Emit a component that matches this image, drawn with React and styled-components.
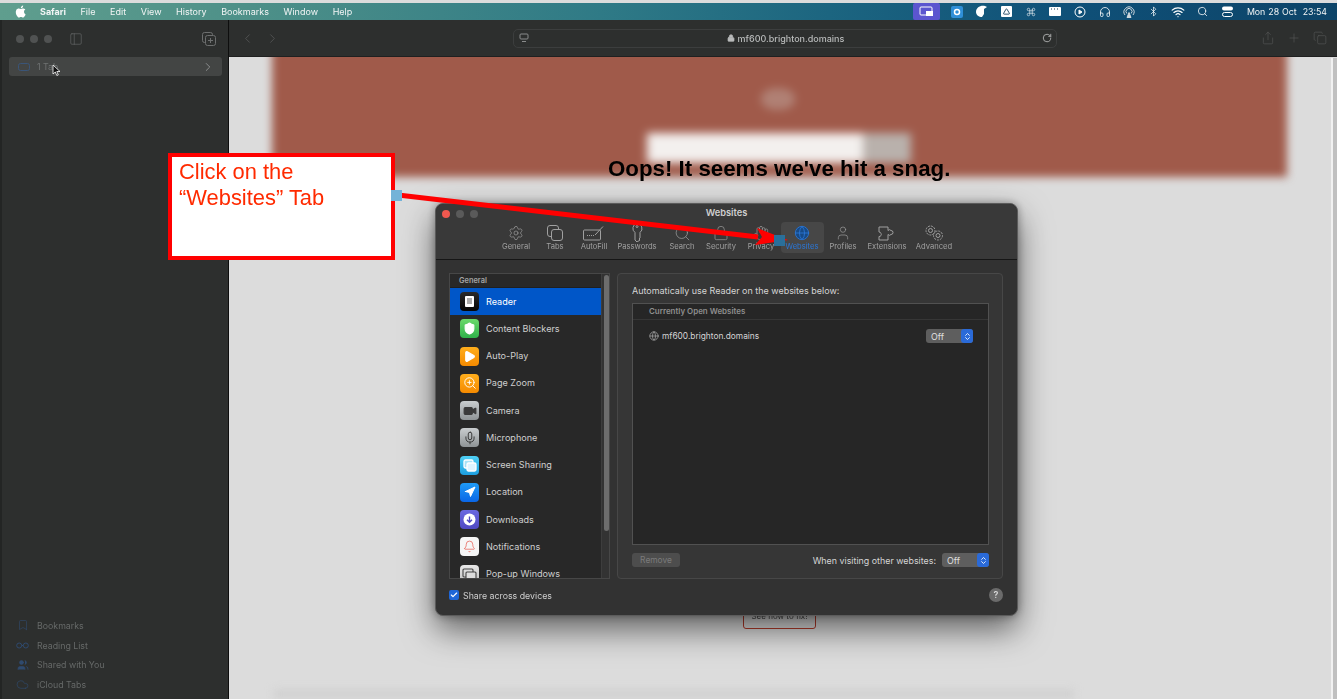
import React from "react";
import styled, { createGlobalStyle } from "styled-components";
import {
  Settings, Search, Lock, Hand, Globe, User, Shield, Play, Video, Mic, Navigation,
  Bell, ChevronLeft, ChevronRight, ChevronsUpDown, Check, RotateCw, Share, Plus, Copy, Bookmark,
  Users, Cloud, Headphones, Bluetooth, Wifi, Command, Triangle, ZoomIn, PanelLeft,
} from "lucide-react";

const Global = createGlobalStyle`
  html, body { margin: 0; padding: 0; background: #dcdcdc; overflow: hidden; }
  #root { width: 1337px; height: 699px; overflow: hidden; }
  * { box-sizing: border-box; }
`;

const Screen = styled.div`
  width: 1337px; height: 699px; display: flex; flex-direction: column;
  font-family: "Inter", "Liberation Sans", sans-serif; position: relative; overflow: hidden;
`;
const TopStrip = styled.div`height: 3px; background: #dcdcdc; flex: none;`;
const MenuBar = styled.div`
  height: 17px; flex: none; display: flex; align-items: center; padding: 0 10px 0 15px;
  background: linear-gradient(90deg, #5f9e8e 0%, #4c8f88 20%, #2f7a86 45%, #1c6580 62%, #0f5078 80%, #0d4468 100%);
  color: #f2f5f5; font-size: 9px; filter: blur(.25px);
`;
const Apple = styled.svg`width: 11px; height: 13px; margin-right: 14px; fill: #fff;`;
const MenuItem = styled.span`margin-right: 14.6px; font-weight: ${p => (p.$b ? 700 : 400)}; white-space: nowrap;`;
const StatusArea = styled.div`margin-left: auto; display: flex; align-items: center; height: 100%;`;
const Highlight = styled.div`
  width: 27px; height: 17px; border-radius: 2px; background: #5b55cf; display: flex; align-items: center; justify-content: center; margin-right: 5px;
`;
const Slot = styled.div`width: 24.6px; display: flex; align-items: center; justify-content: center;`;
const Clock = styled.span`font-size: 8.8px; white-space: nowrap; margin-left: 7px; word-spacing: 0.5px;`;
const BlueTile = styled.div`width: 12px; height: 12px; background: #2f8fd8; border-radius: 2px; display:flex; align-items:center; justify-content:center;`;
const WhiteTile = styled.div`width: 11px; height: 11px; background: #fff; border-radius: 1px; display:flex; align-items:center; justify-content:center;`;

const Window = styled.div`flex: 1; display: flex; min-height: 0;`;
const Sidebar = styled.aside`
  width: 229px; flex: none; background: #2d2f2e; border-left: 2px solid #232524; border-right: 1px solid #0e0e0e;
  display: flex; flex-direction: column; padding: 0 6px 5px 7px; color: #6d6f6f; filter: blur(.25px);
`;
const SideTop = styled.div`height: 37px; display: flex; align-items: center; padding: 0 6px 0 7px; flex: none;`;
const Lights = styled.div`display: flex; gap: 6px; margin-right: 17px;`;
const Light = styled.span`width: 8px; height: 8px; border-radius: 50%; background: ${p => p.$c || "#505252"};`;
const NewTab = styled.svg`margin-left: auto;`;
const TabGroup = styled.div`
  height: 19px; background: #434544; border-radius: 3px; display: flex; align-items: center; padding: 0 7px 0 9px;
  font-size: 8.8px; color: #6f7272; position: relative;
`;
const TabLabel = styled.span`margin-left: 7px;`;
const Pointer = styled.svg`position: absolute; left: 43px; top: 7px; width: 9px; height: 13px;`;
const SideChevron = styled(ChevronRight)`margin-left: auto; color: #a8aaaa;`;
const SideList = styled.div`margin-top: auto; display: flex; flex-direction: column;`;
const SideRow = styled.div`height: 19.6px; display: flex; align-items: center; gap: 8px; padding-left: 7px; font-size: 8.8px; color: #666968;`;
const SideIcon = styled.span`width: 13px; display: flex; justify-content: center; color: #2f4a6e;`;
const Main = styled.main`flex: 1; min-width: 0; display: flex; flex-direction: column;`;
const Toolbar = styled.div`
  height: 37px; flex: none; background: #2d2f2e; display: flex; align-items: center; padding: 0 10px 0 11px;
  color: #595b5b; border-bottom: 1px solid #1f2020; filter: blur(.25px);
`;
const NavGroup = styled.div`display: flex; gap: 10px; width: 273px;`;
const UrlBar = styled.div`
  width: 544px; height: 19px; border: 1px solid #3c3e3e; border-radius: 5px; display: flex; align-items: center;
  justify-content: space-between; padding: 0 4px 0 5px; color: #b9bbbb; font-size: 9px; font-weight: 500;
`;
const UrlText = styled.span`display: flex; align-items: center; gap: 3px;`;
const ToolRight = styled.div`margin-left: auto; display: flex; gap: 12px; align-items: center;`;

const Page = styled.section`flex: 1; position: relative; background: #dcdcdc; display: flex; flex-direction: column; align-items: center; overflow: hidden;`;
const ScrollEdge = styled.div`position: absolute; right: 0; top: 1px; bottom: 0; width: 6px; background: #c0c0c0; border-left: 2px solid #f1f1f1;`;
const BannerClip = styled.div`width: 100%; height: 120px; flex: none; display: flex; justify-content: center;`;
const Banner = styled.div`
  width: 1015px; margin-left: -7px; height: 132px; margin-top: -12px; background: #a05a4a; filter: blur(4px);
  display: flex; flex-direction: column; align-items: center; padding-top: 43px;
`;
const BannerBlob = styled.div`width: 34px; height: 22px; border-radius: 45%; background: #b08074; margin: 0 0 23px -3px;`;
const SearchBlur = styled.div`display: flex; width: 264px; height: 30px; margin-left: -2px; filter: blur(1.5px);`;
const SearchField = styled.div`flex: 1; background: #f3f0ee;`;
const SearchBtn = styled.div`width: 48px; background: #b9b1ac;`;
const Oops = styled.h1`
  position: absolute; left: 379px; top: 99px; margin: 0; font: 700 22.3px/26px "Liberation Sans", sans-serif; color: #000; white-space: nowrap; filter: blur(.35px);
`;
const FixBtn = styled.div`
  position: absolute; left: 514px; top: 545px; width: 73px; height: 27px; border: 1px solid #b33a2a; border-radius: 3px;
  font-size: 8px; color: #444; text-align: center; padding-top: 8px; filter: blur(.3px);
`;
const BottomBlur = styled.div`position: absolute; left: 45px; bottom: 1px; width: 800px; height: 8px; background: #cfcfcf; filter: blur(4px);`;

const Dialog = styled.div`
  position: absolute; left: 206px; top: 146px; width: 583px; height: 413px; background: #323232; border-radius: 8px;
  border: 1px solid #5b5b5b; box-shadow: 0 14px 32px rgba(0,0,0,.55), 0 0 8px rgba(0,0,0,.35); color: #d5d5d5;
  display: flex; flex-direction: column; filter: blur(.3px);
`;
const DTop = styled.header`height: 56px; flex: none; border-bottom: 1px solid #161616; background: #393939; border-radius: 8px 8px 0 0; position: relative; display: flex; flex-direction: column; align-items: center;`;
const DLights = styled.div`position: absolute; left: 6px; top: 6px; display: flex; gap: 6px;`;
const DTitle = styled.div`font-size: 9.3px; font-weight: 600; color: #cfcfcf; margin-top: 3px; line-height: 11px; text-align: center;`;
const DTabs = styled.nav`display: flex; margin-top: 4px; margin-left: 3px; align-items: stretch;`;
const DTab = styled.div`
  height: 31px; width: ${p => p.$w}px; display: flex; flex-direction: column; align-items: center; justify-content: flex-end; border-radius: 4px;
  padding-bottom: 2px; font-size: 7.6px; color: ${p => (p.$on ? "#2a76d6" : "#a0a0a0")}; background: ${p => (p.$on ? "#474747" : "transparent")}; white-space: nowrap;
`;
const DTabIcon = styled.div`height: 20px; display: flex; align-items: center; justify-content: center; margin-top: 2px;`;
const DBody = styled.div`flex: 1; display: flex; padding: 13px 13px 0 13px; gap: 7px; min-height: 0;`;
const ListBox = styled.div`width: 161px; height: 306px; border: 1px solid #474747; background: #282828; display: flex; overflow: hidden;`;
const ListCol = styled.div`width: 151px; flex: none; display: flex; flex-direction: column; overflow: hidden;`;
const ListHead = styled.div`height: 14px; flex: none; font-size: 7.4px; font-weight: 600; color: #a4a4a4; padding: 2px 0 0 9px; border-bottom: 1px solid #1f1f1f;`;
const Row = styled.div`
  height: 27.25px; flex: none; display: flex; align-items: center; gap: 7px; padding-left: 10px; font-size: 9.1px; line-height: 8px;
  color: ${p => (p.$on ? "#fff" : "#cfcfcf")}; background: ${p => (p.$on ? "#0056c8" : "transparent")};
`;
const AppIcon = styled.div`
  width: 19px; height: 19px; border-radius: 4px; background: ${p => p.$bg}; display: flex; align-items: center; justify-content: center; flex: none; color: ${p => p.$fg || "#fff"};
`;
const Track = styled.div`flex: 1; background: #333; border-left: 1px solid #3d3d3d; padding: 1px 2px;`;
const Thumb = styled.div`height: 256px; width: 5px; border-radius: 3px; background: #6d6d6d;`;
const Panel = styled.div`width: 386px; height: 306px; border: 1px solid #474747; border-radius: 4px; background: #363636; padding: 11px 13px 0 14px; display: flex; flex-direction: column;`;
const PanelTitle = styled.div`font-size: 8.96px; line-height: 11px; color: #d5d5d5; margin-bottom: 7px; white-space: nowrap;`;
const Table = styled.div`height: 242px; border: 1px solid #515151; background: #262626; flex: none;`;
const TableHead = styled.div`height: 16px; border-bottom: 1px solid #363636; font-size: 7.95px; font-weight: 600; color: #8f8f8f; padding: 2px 0 0 16px;`;
const TableRow = styled.div`height: 32px; display: flex; align-items: center; padding: 0 15px 0 16px; gap: 3px; font-size: 8.35px; color: #d5d5d5;`;
const Domain = styled.span`flex: 1;`;
const Popup = styled.div`
  width: 47px; height: 14px; border-radius: 3px; background: #5e5e5e; display: flex; align-items: center; justify-content: space-between;
  padding: 0 0 0 5px; font-size: 8.8px; color: #e0e0e0;
`;
const PopupCaret = styled.span`width: 12px; height: 14px; border-radius: 3px; background: #2a6ad8; color: #fff; display: flex; align-items: center; justify-content: center;`;
const PanelFoot = styled.div`display: flex; align-items: center; margin-top: 8px; justify-content: space-between;`;
const Remove = styled.div`width: 48px; height: 14px; border-radius: 3px; background: #4d4d4d; color: #7b7b7b; font-size: 8.4px; text-align: center; line-height: 14px;`;
const Visit = styled.div`display: flex; align-items: center; gap: 6px; font-size: 8.9px; color: #d5d5d5;`;
const DFoot = styled.footer`height: 40px; display: flex; align-items: center; padding: 0 14px 0 13px; gap: 4px; font-size: 8.8px; color: #cfcfcf;`;
const CheckBox = styled.span`width: 10px; height: 10px; border-radius: 2px; background: #1f66d6; display: flex; align-items: center; justify-content: center; color: #fff;`;
const Help = styled.span`margin-left: auto; width: 14px; height: 14px; border-radius: 50%; background: #6b6b6b; color: #d8d8d8; font-size: 9px; font-weight: 600; text-align: center; line-height: 14px;`;

const Callout = styled.div`
  position: absolute; left: 168px; top: 153px; width: 227px; height: 107px; border: 4px solid #ff0000; background: #fff;
  padding: 2px 7px; font: 400 21.9px/25.5px "Liberation Sans", sans-serif; color: #ff2a00; filter: blur(.2px);
`;
const ArrowSvg = styled.svg`position: absolute; left: 0; top: 0; pointer-events: none;`;

const S = { fill: "none", stroke: "currentColor", strokeWidth: 1 };
const tabs = [
  ["General", 33, <Settings strokeWidth={1} size={16} />],
  ["Tabs", 45, <svg width="16" height="16" viewBox="0 0 16 16" {...S}><rect x=".5" y=".5" width="11" height="11" rx="2.500"/><rect x="4.500" y="4.500" width="11" height="11" rx="2.500" fill="#393939"/></svg>],
  ["AutoFill", 33, <svg width="22" height="16" viewBox="0 0 22 16" {...S}><rect x=".5" y="5" width="17" height="10" rx="1"/><path d="M4 10.500h7" strokeDasharray="1 1"/><path d="M12 10l8-8.500"/></svg>],
  ["Passwords", 53, <svg width="12" height="19" viewBox="0 0 12 19" {...S}><path d="M6 .5a5 5 0 0 1 3 9V15l-1 1 1 1-3 2-2-2V9.500a5 5 0 0 1 2-9z"/><circle cx="6" cy="3.500" r="1"/></svg>],
  ["Search", 37, <Search strokeWidth={1} size={17} />],
  ["Security", 41, <Lock strokeWidth={1} size={16} />],
  ["Privacy", 39, <Hand strokeWidth={1} size={16} />],
  ["Websites", 43, <Globe strokeWidth={1.3} size={16} color="#2a76d6" fill="#174a86" />],
  ["Profiles", 39, <User strokeWidth={1} size={16} />],
  ["Extensions", 49, <svg width="18" height="15" viewBox="0 0 18 15" {...S}><path d="M1 1h9v3.500a2 2 0 0 1 3 0a2 2 0 0 1 0 4a2 2 0 0 1-3 0V14H1v-3.500a2 2 0 0 0 2-3a2 2 0 0 0-2-1.500z"/></svg>],
  ["Advanced", 45, <svg width="20" height="16" viewBox="0 0 20 16" {...S}><circle cx="6.500" cy="5.500" r="4.500" strokeDasharray="2 1"/><circle cx="6.500" cy="5.500" r="2"/><circle cx="14" cy="10.500" r="4.500" strokeDasharray="2 1"/><circle cx="14" cy="10.500" r="2"/></svg>],
];
const rows = [
  ["Reader", "linear-gradient(#2a2a2a,#050505)", <svg width="9" height="11" viewBox="0 0 9 11"><rect width="9" height="11" rx="1" fill="#fff"/><path d="M2 3h5M2 5h5M2 7h5" stroke="#333" strokeWidth=".8"/></svg>],
  ["Content Blockers", "linear-gradient(#6bd96b,#2fb14a)", <Shield size={13} fill="#fff" stroke="#fff" />],
  ["Auto-Play", "linear-gradient(#ffae1c,#f58a00)", <Play size={13} fill="#fff" stroke="#fff" />],
  ["Page Zoom", "linear-gradient(#ffae1c,#f58a00)", <ZoomIn size={14} strokeWidth={1.6} />],
  ["Camera", "linear-gradient(#c9cdcf,#8f9496)", <Video size={14} fill="#3a3a3a" stroke="#3a3a3a" />],
  ["Microphone", "linear-gradient(#c9cdcf,#8f9496)", <Mic size={14} stroke="#333" strokeWidth={1.6} />],
  ["Screen Sharing", "linear-gradient(#4fd0f5,#1d9fe0)", <svg width="14" height="13" viewBox="0 0 14 13" fill="none" stroke="#fff" strokeWidth="1.300"><rect x="1" y="1" width="9" height="8" rx="1.500" fill="rgba(255,255,255,.55)"/><rect x="4" y="4" width="9" height="8" rx="1.500" fill="#dff4ff"/></svg>],
  ["Location", "linear-gradient(#1f9bf6,#0a66e6)", <Navigation size={12} fill="#fff" stroke="#fff" />],
  ["Downloads", "linear-gradient(#6a68e0,#4f49c2)", <svg width="13" height="13" viewBox="0 0 13 13"><circle cx="6.500" cy="6.500" r="6" fill="#fff"/><path d="M6.500 3.500v5.500M4 6.800l2.500 2.400L9 6.800" fill="none" stroke="#4f49c2" strokeWidth="1.400"/></svg>],
  ["Notifications", "#f6f6f6", <Bell size={13} stroke="#e5483c" strokeWidth={1.2} />],
  ["Pop-up Windows", "linear-gradient(#e8e8e8,#bdbdbd)", <svg width="15" height="13" viewBox="0 0 15 13" fill="none" stroke="#444" strokeWidth="1.100"><rect x="1" y="1" width="10" height="8" rx="1"/><rect x="4" y="4" width="10" height="8" rx="1" fill="#ddd"/></svg>],
];

const statusIcons = [
  <BlueTile><svg width="8" height="8" viewBox="0 0 8 8"><circle cx="4" cy="4" r="2.500" fill="none" stroke="#fff" strokeWidth="1.500"/></svg></BlueTile>,
  <svg width="13" height="13" viewBox="0 0 13 13"><path d="M1 7C1 3 5 0 10 1l2 1-3 2v5l-2 3C4 12 1 10 1 7z" fill="#fff"/></svg>,
  <WhiteTile><Triangle size={7} stroke="#143c58" strokeWidth={3} /></WhiteTile>,
  <Command size={10} color="#fff" strokeWidth={1.4} />,
  <svg width="12" height="9" viewBox="0 0 12 9"><rect width="12" height="9" rx="1" fill="#fff"/><path d="M2 2h1M5 2h1M8 2h1" stroke="#143c58"/></svg>,
  <svg width="12" height="12" viewBox="0 0 12 12" fill="none" stroke="#fff"><circle cx="6" cy="6" r="5"/><path d="M5 4l3 2-3 2z" fill="#fff"/></svg>,
  <Headphones size={12} color="#fff" strokeWidth={1.6} />,
  <svg width="12" height="12" viewBox="0 0 12 12" fill="none" stroke="#cfd8de"><path d="M2 9a5 5 0 1 1 8 0M3.800 7.500a3 3 0 1 1 4.400 0"/><path d="M4 11.500l2-5 2 5z" fill="#cfd8de"/></svg>,
  <Bluetooth size={11} color="#fff" strokeWidth={1.5} />,
  <Wifi size={14} color="#fff" strokeWidth={2} />,
  <Search size={11} color="#fff" strokeWidth={1.7} />,
  <svg width="11" height="11" viewBox="0 0 11 11" fill="#fff"><rect x="0" y=".5" width="11" height="4" rx="2"/><rect x=".5" y="6.500" width="10" height="4" rx="2" fill="none" stroke="#fff"/></svg>,
];

export default function App() {
  return (
    <Screen>
      <Global />
      <TopStrip />
      <MenuBar>
        <Apple viewBox="0 0 14 17"><path d="M11.600 9c0-2 1.600-2.900 1.700-3-1-1.300-2.400-1.500-2.900-1.500-1.200-.1-2.400.7-3 .7s-1.600-.7-2.600-.7C3.400 4.500 2.200 5.300 1.500 6.400.1 8.800 1.100 12.400 2.500 14.400c.7 1 1.500 2.100 2.500 2 1 0 1.400-.6 2.600-.6s1.600.6 2.600.6 1.800-1 2.400-2c.8-1.100 1.100-2.200 1.100-2.300 0 0-2.100-.8-2.100-3.100zM9.700 3.200c.5-.7.9-1.600.8-2.500-.8 0-1.700.5-2.300 1.200-.5.6-.9 1.500-.8 2.400.9.100 1.700-.4 2.300-1.100z"/></Apple>
        <MenuItem $b>Safari</MenuItem>
        {["File", "Edit", "View", "History", "Bookmarks", "Window", "Help"].map(m => <MenuItem key={m}>{m}</MenuItem>)}
        <StatusArea>
          <Highlight><svg width="15" height="11" viewBox="0 0 15 11" fill="none" stroke="#fff"><rect x="1" y="1" width="12" height="8" rx="1"/><rect x="7" y="5" width="7" height="5" fill="#fff" stroke="none"/></svg></Highlight>
          {statusIcons.map((ic, i) => <Slot key={i}>{ic}</Slot>)}
          <Clock>Mon 28 Oct&nbsp; 23:54</Clock>
        </StatusArea>
      </MenuBar>
      <Window>
        <Sidebar>
          <SideTop>
            <Lights><Light /><Light /><Light /></Lights>
            <PanelLeft size={14} strokeWidth={1} />
            <NewTab width="14" height="14" viewBox="0 0 14 14" {...S}><rect x=".5" y=".5" width="10" height="10" rx="2"/><rect x="3.500" y="3.500" width="10" height="10" rx="2" fill="#2d2f2e"/><path d="M8.500 6v5M6 8.500h5"/></NewTab>
          </SideTop>
          <TabGroup>
            <svg width="12" height="8" viewBox="0 0 12 8" fill="none" stroke="#3a5578"><rect x=".5" y=".5" width="11" height="7" rx="2"/></svg>
            <TabLabel>1 Tab</TabLabel>
            <Pointer viewBox="0 0 9 13"><path d="M1 1v9l2.300-2 1.500 3.500 1.500-.6L4.800 7.500H8z" fill="#111" stroke="#fff" strokeWidth=".8"/></Pointer>
            <SideChevron size={14} strokeWidth={1.2} />
          </TabGroup>
          <SideList>
            <SideRow><SideIcon><Bookmark size={12} strokeWidth={1.2} /></SideIcon>Bookmarks</SideRow>
            <SideRow><SideIcon><svg width="13" height="7" viewBox="0 0 13 7" fill="none" stroke="currentColor"><circle cx="3.200" cy="3.500" r="2.500"/><circle cx="9.800" cy="3.500" r="2.500"/><path d="M5.700 3.500h1.600"/></svg></SideIcon>Reading List</SideRow>
            <SideRow><SideIcon><Users size={12} fill="#2f4a6e" strokeWidth={1.2} /></SideIcon>Shared with You</SideRow>
            <SideRow><SideIcon><Cloud size={13} strokeWidth={1.2} /></SideIcon>iCloud Tabs</SideRow>
          </SideList>
        </Sidebar>
        <Main>
          <Toolbar>
            <NavGroup><ChevronLeft size={15} strokeWidth={1.2} /><ChevronRight size={15} strokeWidth={1.2} /></NavGroup>
            <UrlBar>
              <svg width="10" height="10" viewBox="0 0 10 10" fill="none" stroke="#8a8c8c"><rect x="1" y="1" width="8" height="5" rx="1"/><path d="M3 8.500h4"/></svg>
              <UrlText><Lock size={8} strokeWidth={2} fill="#b9bbbb" />mf600.brighton.domains</UrlText>
              <RotateCw size={10} color="#b9bbbb" />
            </UrlBar>
            <ToolRight>
              <Share size={14} strokeWidth={1} />
              <Plus size={14} strokeWidth={1} />
              <Copy size={14} strokeWidth={1} />
            </ToolRight>
          </Toolbar>
          <Page>
            <BannerClip>
              <Banner>
                <BannerBlob />
                <SearchBlur><SearchField /><SearchBtn /></SearchBlur>
              </Banner>
            </BannerClip>
            <Oops>Oops! It seems we've hit a snag.</Oops>
            <FixBtn>See how to fix!</FixBtn>
            <BottomBlur />
            <ScrollEdge />
            <Dialog>
              <DTop>
                <DLights><Light $c="#f0584f" /><Light $c="#5a5a5a" /><Light $c="#5a5a5a" /></DLights>
                <DTitle>Websites</DTitle>
                <DTabs>
                  {tabs.map(([l, w, ic]) => (
                    <DTab key={l} $w={w} $on={l === "Websites"}><DTabIcon>{ic}</DTabIcon>{l}</DTab>
                  ))}
                </DTabs>
              </DTop>
              <DBody>
                <ListBox>
                  <ListCol>
                    <ListHead>General</ListHead>
                    {rows.map(([l, bg, ic], i) => (
                      <Row key={l} $on={i === 0}><AppIcon $bg={bg}>{ic}</AppIcon>{l}</Row>
                    ))}
                  </ListCol>
                  <Track><Thumb /></Track>
                </ListBox>
                <Panel>
                  <PanelTitle>Automatically use Reader on the websites below:</PanelTitle>
                  <Table>
                    <TableHead>Currently Open Websites</TableHead>
                    <TableRow>
                      <Globe size={10} color="#9a9a9a" />
                      <Domain>mf600.brighton.domains</Domain>
                      <Popup>Off<PopupCaret><ChevronsUpDown size={9} strokeWidth={2.2} /></PopupCaret></Popup>
                    </TableRow>
                  </Table>
                  <PanelFoot>
                    <Remove>Remove</Remove>
                    <Visit>When visiting other websites:<Popup>Off<PopupCaret><ChevronsUpDown size={9} strokeWidth={2.2} /></PopupCaret></Popup></Visit>
                  </PanelFoot>
                </Panel>
              </DBody>
              <DFoot>
                <CheckBox><Check size={8} strokeWidth={3.5} /></CheckBox>
                <span>Share across devices</span>
                <Help>?</Help>
              </DFoot>
            </Dialog>
          </Page>
        </Main>
      </Window>
      <Callout>Click on the<br />“Websites” Tab</Callout>
      <ArrowSvg width="1337" height="699" viewBox="0 0 1337 699">
        <path d="M398 195 L758 237" stroke="#ff0000" strokeWidth="5" />
        <path d="M757 228 L788 240 L755 245 L762 237 Z" fill="#ff0000" />
        <rect x="391" y="190" width="11" height="11" fill="#74b3d8" />
        <rect x="774" y="235" width="11" height="11" fill="#2a6f9a" />
      </ArrowSvg>
    </Screen>
  );
}
